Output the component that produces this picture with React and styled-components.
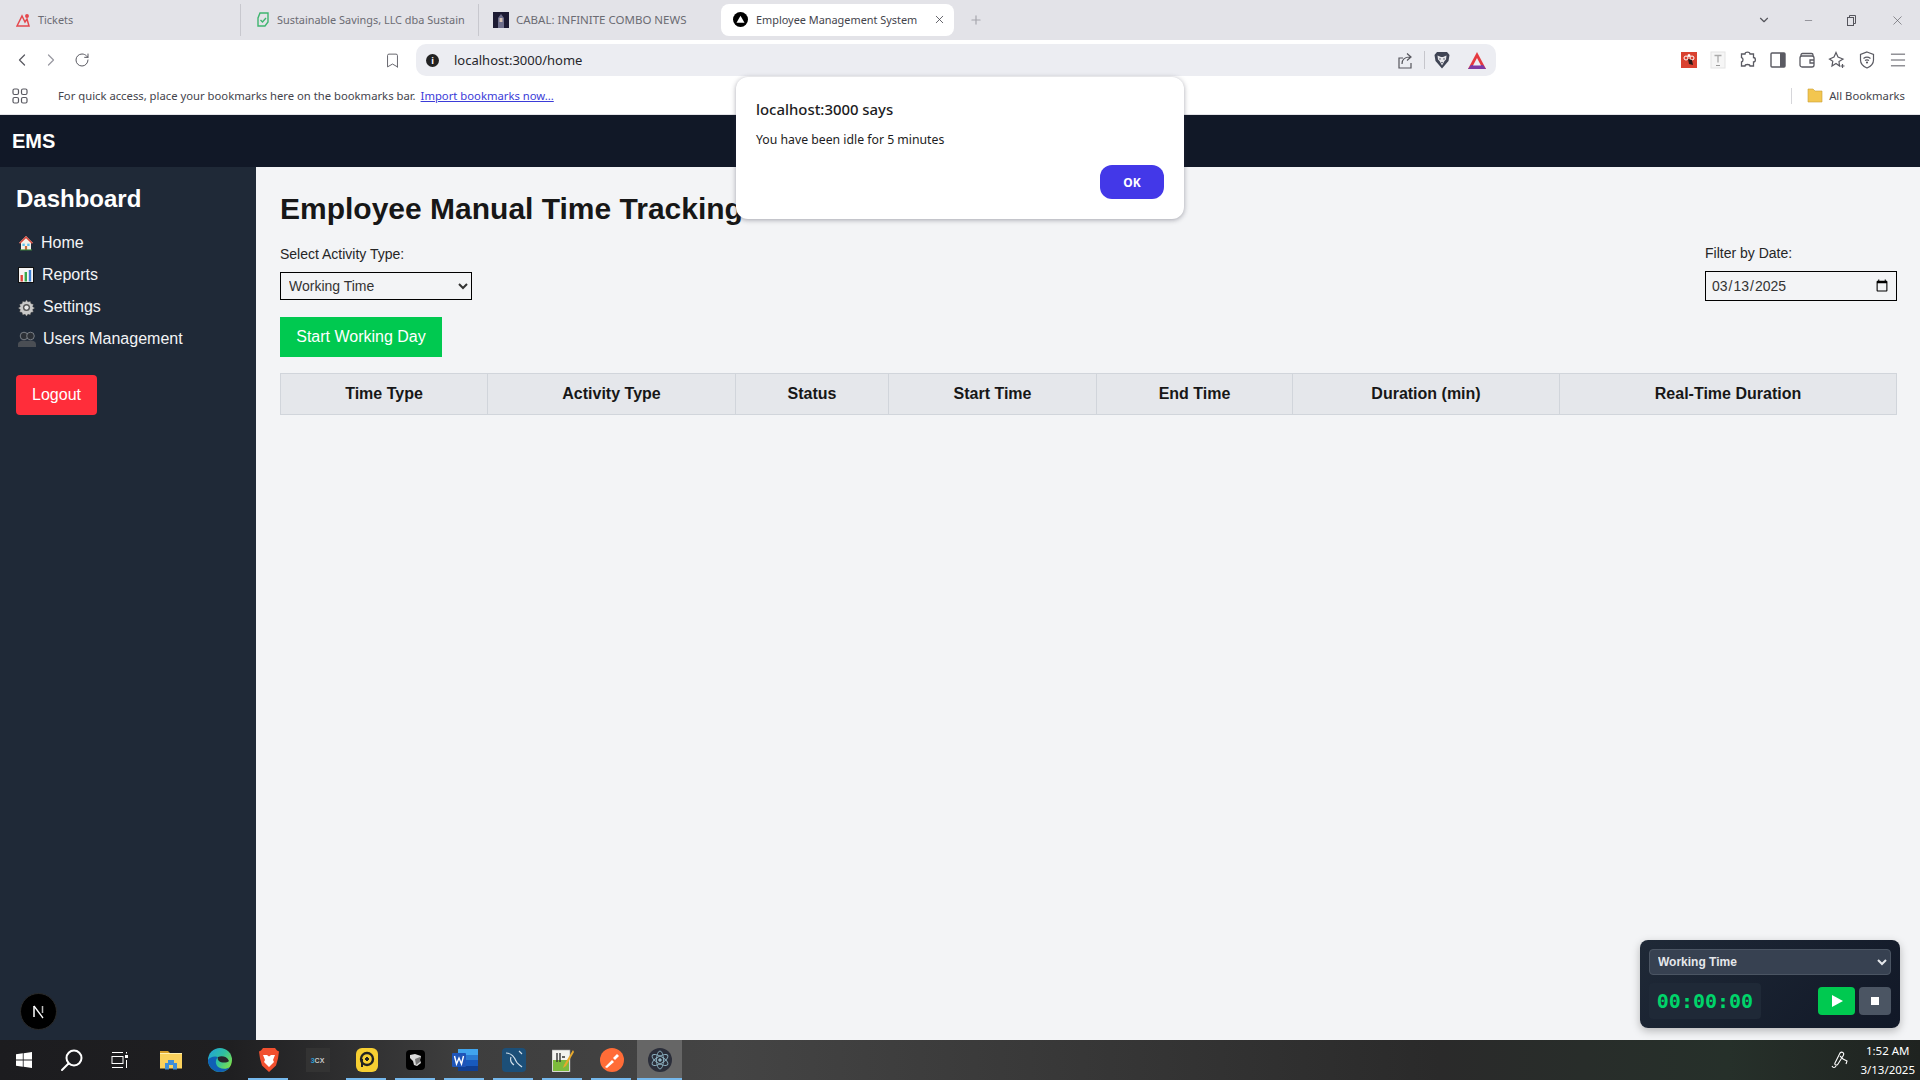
import React from "react";
import styled, { createGlobalStyle } from "styled-components";
import {
  ChevronLeft,
  ChevronRight,
  RotateCw,
  Bookmark,
  X,
  Plus,
  ChevronDown,
  Minus,
  Menu,
} from "lucide-react";

const GlobalStyle = createGlobalStyle`
  html, body {
    margin: 0;
    padding: 0;
    height: 100%;
    overflow: hidden;
  }
  body {
    font-family: "Liberation Sans", Arial, sans-serif;
    background: #f3f4f6;
  }
  * {
    box-sizing: border-box;
  }
`;

const chromeFont = `"Noto Sans", "Open Sans", sans-serif`;

const Page = styled.div`
  position: relative;
  display: flex;
  flex-direction: column;
  width: 1920px;
  height: 1080px;
  overflow: hidden;
`;

/* browser chrome */
const TabStrip = styled.div`
  display: flex;
  align-items: center;
  height: 40px;
  flex: none;
  background: #e3e3e8;
  font-family: ${chromeFont};
  font-size: 10.9px;
  color: #6b6b73;
`;

const Tab = styled.div`
  display: flex;
  align-items: center;
  gap: ${(props) => props.$gap || 7}px;
  width: ${(props) => props.$width}px;
  height: 32px;
  padding-left: ${(props) => props.$pad}px;
  padding-bottom: 1px;
  border-right: ${(props) => (props.$divider ? "1px solid #c8c8ce" : "none")};
  font-size: ${(props) => props.$size || 10.9}px;
  overflow: hidden;
  white-space: nowrap;
`;

const TabLabel = styled.span`
  display: block;
  max-width: 188px;
  overflow: hidden;
`;

const ActiveTab = styled.div`
  display: flex;
  align-items: center;
  gap: 8px;
  width: 233px;
  height: 32px;
  margin-left: 1px;
  padding: 0 8px 1px 12px;
  background: #fff;
  border-radius: 8px;
  color: #44444c;
  white-space: nowrap;
`;

const TabTitle = styled.span`
  flex: 1;
`;

const NewTab = styled.div`
  display: flex;
  margin-left: 15px;
  color: #a5a5ac;
`;

const WindowControls = styled.div`
  display: flex;
  align-items: center;
  gap: 32px;
  margin-left: auto;
  padding-right: 15px;
  color: #55555c;
`;

const Toolbar = styled.div`
  display: flex;
  align-items: center;
  height: 40px;
  flex: none;
  padding: 0 12px;
  background: #fff;
  color: #5a5a62;
`;

const NavIcons = styled.div`
  display: flex;
  align-items: center;
  gap: 9px;
  width: 372px;
`;

const ForwardIcon = styled.span`
  display: flex;
  margin-right: 4px;
  color: #9a9aa2;
`;

const BookmarkSlot = styled.div`
  display: flex;
  width: 32px;
`;

const AddressBar = styled.div`
  display: flex;
  align-items: center;
  width: 1080px;
  height: 32px;
  padding: 0 10px;
  background: #ecedf2;
  border-radius: 10px;
  font-family: ${chromeFont};
  font-size: 13px;
  color: #26262c;
`;

const InfoDot = styled.span`
  display: flex;
  align-items: center;
  justify-content: center;
  width: 13px;
  height: 13px;
  margin-right: 15px;
  border-radius: 50%;
  background: #222;
  color: #fff;
  font-size: 9px;
  font-weight: 700;
`;

const AddressEnd = styled.div`
  display: flex;
  align-items: center;
  gap: 9px;
  margin-left: auto;
`;

const ThinRule = styled.span`
  width: 1px;
  height: 18px;
  background: #c6c6cc;
`;

const Extensions = styled.div`
  display: flex;
  align-items: center;
  gap: 13px;
  margin-left: auto;
`;

const BookmarksBar = styled.div`
  display: flex;
  align-items: center;
  height: 35px;
  flex: none;
  padding: 0 15px 3px 12px;
  background: #fff;
  border-bottom: 1px solid #e4e4e8;
  font-family: ${chromeFont};
  font-size: 11.27px;
  color: #44444c;
`;

const BookmarkHint = styled.span`
  margin-left: 30px;
  padding-bottom: 1px;
`;

const ImportLink = styled.a`
  margin-left: 5px;
  padding-bottom: 1px;
  color: #3b3bd8;
  text-decoration: underline;
`;

const AllBookmarks = styled.div`
  display: flex;
  align-items: center;
  gap: 6px;
  margin-left: auto;
  padding-left: 15px;
  border-left: 1px solid #d6d6da;
  height: 16px;
`;

/* app */
const TopBar = styled.header`
  display: flex;
  align-items: center;
  flex: none;
  height: 52px;
  padding-left: 12px;
  background: #111827;
  color: #fff;
  font-size: 20px;
  font-weight: 700;
`;

const Body = styled.div`
  display: flex;
  flex: 1;
  min-height: 0;
`;

const Sidebar = styled.aside`
  display: flex;
  flex-direction: column;
  flex: none;
  width: 256px;
  padding: 17px 16px 16px;
  background: #1f2937;
  color: #fff;
`;

const SidebarTitle = styled.h2`
  margin: 0 0 17px;
  font-size: 24px;
  line-height: 30px;
  font-weight: 700;
`;

const NavList = styled.ul`
  display: flex;
  flex-direction: column;
  gap: 8px;
  margin: 0 0 24px;
  padding: 0;
  list-style: none;
`;

const NavItem = styled.li`
  display: flex;
  align-items: center;
  gap: ${(props) => props.$gap}px;
  height: 24px;
  padding-left: 2px;
  font-size: 16px;
  color: #f3f4f6;
`;

const LogoutButton = styled.button`
  width: 81px;
  height: 40px;
  border: none;
  border-radius: 4px;
  background: #ff2d3a;
  color: #fff;
  font-family: inherit;
  font-size: 16px;
`;

const Main = styled.main`
  flex: 1;
  padding: 24px;
  background: #f3f4f6;
  color: #171717;
`;

const Heading = styled.h1`
  margin: 0 0 16px;
  font-size: 30px;
  line-height: 36px;
  font-weight: 700;
`;

const FilterRow = styled.div`
  display: flex;
  justify-content: space-between;
  margin-bottom: 16px;
`;

const Field = styled.div`
  display: flex;
  flex-direction: column;
`;

const FieldLabel = styled.label`
  margin-bottom: 8px;
  padding-top: ${(props) => props.$top}px;
  font-size: 14px;
  line-height: 20px;
  color: #262626;
`;

const ActivitySelect = styled.select`
  width: 192px;
  height: 28px;
  padding: 0 4px;
  border: 1px solid #000;
  background: #f3f4f6;
  color: #333;
  font-family: inherit;
  font-size: 14px;
  border-radius: 0;
`;

const DateInput = styled.input`
  width: 192px;
  height: 30px;
  padding: 0 5px;
  border: 1px solid #000;
  background: #f3f4f6;
  color: #333;
  font-family: inherit;
  font-size: 14px;
`;

const StartButton = styled.button`
  display: block;
  width: 162px;
  height: 40px;
  margin-bottom: 16px;
  border: none;
  background: #00c950;
  color: #fff;
  font-family: inherit;
  font-size: 16px;
`;

const Table = styled.table`
  width: 100%;
  border-collapse: collapse;
  table-layout: fixed;
`;

const Column = styled.col`
  width: ${(props) => props.$width}px;
`;

const HeaderCell = styled.th`
  height: 41px;
  padding: 0;
  border: 1px solid #d1d5db;
  background: #e5e7eb;
  font-size: 16px;
  font-weight: 700;
  text-align: center;
  color: #171717;
`;

/* floating bits */
const AlertBox = styled.div`
  position: absolute;
  top: 77px;
  left: 736px;
  display: flex;
  flex-direction: column;
  width: 448px;
  height: 142px;
  padding: 21px 20px 20px;
  border-radius: 12px;
  background: #fff;
  box-shadow: 0 1px 5px rgba(40, 40, 60, 0.4);
  font-family: ${chromeFont};
  color: #1c1c22;
`;

const AlertTitle = styled.div`
  font-size: 14.9px;
  line-height: 22px;
  font-weight: 500;
`;

const AlertText = styled.div`
  margin-top: 11px;
  font-size: 12.25px;
  line-height: 18px;
`;

const AlertOk = styled.button`
  align-self: flex-end;
  width: 64px;
  height: 34px;
  margin-top: auto;
  border: none;
  border-radius: 12px;
  background: #4338e8;
  color: #fff;
  font-family: inherit;
  font-size: 12px;
  font-weight: 700;
`;

const DevBadge = styled.div`
  position: absolute;
  left: 20px;
  top: 993px;
  display: flex;
  align-items: center;
  justify-content: center;
  width: 37px;
  height: 37px;
  border-radius: 50%;
  background: #000;
  border: 1px solid #2a2a2a;
`;

const TimerPanel = styled.div`
  position: absolute;
  left: 1640px;
  top: 940px;
  display: flex;
  flex-direction: column;
  gap: 8px;
  width: 260px;
  height: 88px;
  padding: 9px;
  border-radius: 8px;
  background: linear-gradient(135deg, #1f2937, #111827);
  box-shadow: 0 3px 8px rgba(0, 0, 0, 0.25);
`;

const TimerSelect = styled.select`
  width: 100%;
  height: 26px;
  padding: 0 4px;
  border: 1px solid #4b5563;
  border-radius: 4px;
  background: #374151;
  color: #e5e7eb;
  font-family: inherit;
  font-size: 12px;
  font-weight: 700;
`;

const TimerRow = styled.div`
  display: flex;
  align-items: center;
  gap: 4px;
`;

const Clock = styled.div`
  width: 112px;
  height: 36px;
  margin-right: auto;
  border-radius: 4px;
  background: #1f2937;
  color: #00d46a;
  font-family: "DejaVu Sans Mono", "Liberation Mono", monospace;
  font-size: 20px;
  font-weight: 700;
  line-height: 36px;
  text-align: center;
`;

const TimerButton = styled.button`
  display: flex;
  align-items: center;
  justify-content: center;
  width: ${(props) => props.$width}px;
  height: 28px;
  padding: 0;
  border: none;
  border-radius: 4px;
  background: ${(props) => props.$bg};
`;

/* taskbar */
const Taskbar = styled.footer`
  display: flex;
  align-items: center;
  flex: none;
  height: 40px;
  background: linear-gradient(
    90deg,
    #1c1c1f 0,
    #1f1f21 12%,
    #3e3e3e 24%,
    #444 38%,
    #383838 55%,
    #2a2a2a 75%,
    #26302a 90%,
    #1f2320 100%
  );
  color: #fff;
`;

const SystemSlots = styled.div`
  display: flex;
  width: 146px;
`;

const SystemSlot = styled.div`
  display: flex;
  align-items: center;
  justify-content: center;
  width: 48px;
  height: 40px;
`;

const TaskSlot = styled.div`
  position: relative;
  display: flex;
  align-items: center;
  justify-content: center;
  width: ${(props) => (props.$active ? 45 : 49)}px;
  height: 40px;
  margin-left: ${(props) => (props.$active ? 1 : 0)}px;
  background: ${(props) => (props.$active ? "#666" : "transparent")};
  &::after {
    content: "";
    display: ${(props) => (props.$open ? "block" : "none")};
    position: absolute;
    left: ${(props) => (props.$active ? 0 : 4)}px;
    right: ${(props) => (props.$active ? 0 : 5)}px;
    bottom: 0;
    height: 2px;
    background: #76b9ed;
  }
`;

const ThreeCx = styled.span`
  display: flex;
  align-items: center;
  justify-content: center;
  width: 24px;
  height: 24px;
  background: #333;
  color: #c8c8c8;
  font-size: 7px;
  font-weight: 700;
`;

const ThreeMark = styled.span`
  color: #2b9bd3;
`;

const Tray = styled.div`
  display: flex;
  align-items: center;
  gap: 11px;
  margin-left: auto;
  padding-right: 5px;
`;

const TrayClock = styled.div`
  font-family: ${chromeFont};
  font-size: 11.5px;
  line-height: 19px;
  text-align: center;
`;

const NAV_COLUMNS = [
  ["Time Type", 207],
  ["Activity Type", 248],
  ["Status", 153],
  ["Start Time", 208],
  ["End Time", 196],
  ["Duration (min)", 267],
  ["Real-Time Duration", 337],
];

const HomeIcon = () => (
  <svg width="16" height="16" viewBox="0 0 16 16">
    <path d="M8 1 1 8h2v7h10V8h2z" fill="#f5f0e6" />
    <path d="M8 1 1 8l1.2.8L8 3.2l5.8 5.6L15 8z" fill="#d8473b" />
    <rect x="4.4" y="8.6" width="2.4" height="2.4" fill="#5cc3ee" />
    <rect x="9.2" y="8.6" width="2.4" height="2.4" fill="#5cc3ee" />
    <rect x="6.9" y="11" width="2.2" height="4" fill="#c56b3a" />
    <rect x="2" y="14.4" width="12" height="1" fill="#3f8f3a" />
  </svg>
);

const ChartIcon = () => (
  <svg width="16" height="16" viewBox="0 0 16 16">
    <rect x="0.5" y="0.5" width="15" height="15" fill="#f4f4f4" stroke="#111" />
    <rect x="2.5" y="8" width="2.4" height="6.5" fill="#e0443a" />
    <rect x="6.6" y="5" width="2.4" height="9.5" fill="#39a84a" />
    <rect x="10.8" y="3" width="2.4" height="11.5" fill="#3a7fd5" />
  </svg>
);

const GearIcon = () => (
  <svg width="17" height="17" viewBox="0 0 24 24">
    <path
      d="M12 1l2 3 3.500-1 .8 3.500 3.500.8-1 3.500 3 2-3 2 1 3.500-3.500.8-.8 3.500-3.500-1-2 3-2-3-3.500 1-.8-3.500-3.500-.8 1-3.500-3-2 3-2-1-3.500 3.500-.8.8-3.500 3.500 1z"
      fill="#c9c9c9"
      stroke="#333"
      strokeWidth="0.6"
    />
    <circle cx="12" cy="12" r="5" fill="#555" />
    <circle cx="12" cy="12" r="3" fill="#e8e8e8" />
  </svg>
);

const BustsIcon = () => (
  <svg width="18" height="16" viewBox="0 0 18 16">
    <circle cx="6" cy="5" r="3.800" fill="#2c3036" stroke="#9a9ea3" strokeWidth="0.7" />
    <circle cx="12.500" cy="5" r="3.800" fill="#2c3036" stroke="#9a9ea3" strokeWidth="0.7" />
    <path d="M0 16v-2.500C0 10.500 3 9.500 6 9.500c1.500 0 2.500.3 3 .5.500-.2 2-.5 3.500-.5 3 0 5.500 1 5.500 4V16z" fill="#4a4e54" />
  </svg>
);

const TicketsFavicon = () => (
  <svg width="14" height="14" viewBox="0 0 14 14" fill="none" stroke="#e5484d" strokeWidth="1.500">
    <path d="M1 13 6 3l3 6 2-3 2 7z" />
    <circle cx="11" cy="3" r="1.200" fill="#e5484d" />
  </svg>
);

const SavingsFavicon = () => (
  <svg width="14" height="16" viewBox="0 0 14 16" fill="none" stroke="#3fb56f" strokeWidth="1.400">
    <path d="M4 1h8v9l-3 4H2V6z" />
    <path d="M4.500 8l2 2 3.500-4" />
  </svg>
);

const CabalFavicon = () => (
  <svg width="16" height="16" viewBox="0 0 16 16">
    <rect width="16" height="16" fill="#1d1b33" />
    <path d="M5 16V6l3-4 3 4v10z" fill="#6f6f8c" />
    <path d="M6.500 6h3v4h-3z" fill="#d7c3b5" />
  </svg>
);

const VercelFavicon = () => (
  <svg width="15" height="15" viewBox="0 0 15 15">
    <circle cx="7.500" cy="7.500" r="7.500" fill="#000" />
    <path d="M7.500 3.800 11.500 10.800h-8z" fill="#fff" />
  </svg>
);

const RestoreIcon = () => (
  <svg width="12" height="12" viewBox="0 0 12 12" fill="none" stroke="currentColor">
    <rect x="1.500" y="3.500" width="6" height="8" />
    <path d="M3.500 3.500v-2h6v8h-2" />
  </svg>
);

const ShareIcon = () => (
  <svg width="18" height="18" viewBox="0 0 18 18" fill="none" stroke="#55555c" strokeWidth="1.200">
    <path d="M6 7H2v10h12v-5" />
    <path d="M5 13c0-5 3-7 8-7M10 2.500 14 6l-4 3.500" />
  </svg>
);

const LionIcon = () => (
  <svg width="16" height="18" viewBox="0 0 16 18">
    <path d="M3 1h10l2.500 3-1 6-6.500 7.500L1.500 10l-1-6z" fill="#3f4454" />
    <path d="M3.500 4.500 7 6h2l3.500-1.500-.5 4-1.500 1.500L8 14.500 5.500 10 4 8.500z" fill="#e6e6ea" />
    <path d="M5 7.500h2L6 9zM9 7.500h2L10 9zM7 11h2l-1 1.500z" fill="#3f4454" />
  </svg>
);

const BatIcon = () => (
  <svg width="18" height="17" viewBox="0 0 18 17">
    <path d="M9 0 18 17H0z" fill="#e5393f" />
    <path d="M0 17l3-4h12l3 4z" fill="#7d3aa3" />
    <path d="M9 6 13 13.500H5z" fill="#ecedf2" />
  </svg>
);

const ExtPixel = () => (
  <svg width="16" height="16" viewBox="0 0 16 16">
    <rect width="16" height="16" fill="#d9412f" />
    <circle cx="5" cy="6" r="2" fill="none" stroke="#fff" />
    <circle cx="11" cy="6" r="2" fill="none" stroke="#fff" />
    <circle cx="8" cy="3.500" r="1.500" fill="#fff" />
    <path d="M7 7l4 1 1 5-4-1z" fill="#2b1a18" />
  </svg>
);

const ExtT = () => (
  <svg width="16" height="18" viewBox="0 0 16 18">
    <rect x="1" y="1" width="14" height="16" fill="#f6f6f6" stroke="#e4e4e4" />
    <path d="M4.500 4.500h7M8 4.500v7" stroke="#aaa" strokeWidth="1.300" fill="none" />
    <path d="M6 14.500h4" stroke="#999" />
  </svg>
);

const ExtPuzzle = () => (
  <svg width="18" height="18" viewBox="0 0 18 18" fill="none" stroke="#5a5a62" strokeWidth="1.300">
    <path d="M6 3c0-2.500 5-2.500 5 0h3.500v3.500c2.500 0 2.500 4.500 0 4.500V15H11c0-2-5-2-5 0H2.500v-4c2-.5 2-4 0-4.500V3z" />
  </svg>
);

const ExtPanel = () => (
  <svg width="16" height="16" viewBox="0 0 16 16">
    <rect x="1" y="1" width="14" height="14" rx="1" fill="#fff" stroke="#5a5a62" strokeWidth="1.400" />
    <rect x="10" y="1" width="5" height="14" fill="#5a5a62" />
  </svg>
);

const ExtWallet = () => (
  <svg width="16" height="16" viewBox="0 0 16 16" fill="none" stroke="#5a5a62" strokeWidth="1.300">
    <path d="M2 4V3q0-1.500 1.500-1.500h9Q14 1.500 14 3v1" />
    <rect x="1" y="4" width="14" height="11" rx="2" />
    <path d="M15 8h-4v3h4" />
  </svg>
);

const ExtStar = () => (
  <svg width="18" height="18" viewBox="0 0 18 18" fill="none" stroke="#5a5a62" strokeWidth="1.200">
    <path d="M8 1.500 10 6l5 2-4 2.500.500 4.500-3.500-2.500L4 15l.8-4.800L1.500 8l4.500-2z" />
    <path d="M14.500 13v4M12.500 15h4" />
  </svg>
);

const ExtShield = () => (
  <svg width="16" height="18" viewBox="0 0 16 18" fill="none" stroke="#5a5a62" strokeWidth="1.200">
    <path d="M8 1l6.500 2.500V9c0 4-3 6.500-6.500 8-3.500-1.500-6.500-4-6.500-8V3.500z" />
    <path d="M4.500 7.500c2-1.500 5-1.500 7 0M6 9.500c1.300-.8 2.700-.8 4 0" />
    <circle cx="8" cy="11.500" r=".5" />
  </svg>
);

const AppsIcon = () => (
  <svg width="16" height="16" viewBox="0 0 16 16" fill="none" stroke="#5a5a62" strokeWidth="1.200">
    <rect x="1" y="1" width="5.500" height="5.500" rx="1.500" />
    <rect x="9.500" y="1" width="5.500" height="5.500" rx="1.500" />
    <rect x="1" y="9.500" width="5.500" height="5.500" rx="1.500" />
    <rect x="9.500" y="9.500" width="5.500" height="5.500" rx="1.500" />
  </svg>
);

const FolderIcon = () => (
  <svg width="16" height="15" viewBox="0 0 16 15">
    <path d="M1 1h5l2 2h7v11H1z" fill="#f3c64f" stroke="#c9a035" strokeWidth="0.6" />
  </svg>
);

const NextMark = () => (
  <svg width="17" height="17" viewBox="0 0 17 17" fill="none" stroke="#fff" strokeWidth="1.500">
    <path d="M4 14V3" />
    <path d="M4 3l9 12" strokeWidth="1.300" />
    <path d="M12.500 3v7" stroke="#bbb" />
  </svg>
);

const WinIcon = () => (
  <svg width="16" height="16" viewBox="0 0 16 16" fill="#fff">
    <path d="M0 2.300 6.800 1.300V7.600H0zM7.600 1.200 16 0V7.600H7.600zM0 8.400H6.800V14.700L0 13.700zM7.600 8.400H16V16L7.600 14.800z" />
  </svg>
);

const SearchIcon = () => (
  <svg width="24" height="24" viewBox="0 0 24 24" fill="none" stroke="#fff" strokeWidth="2">
    <circle cx="14" cy="10" r="7.500" />
    <path d="M8.500 15.500 2 22" strokeLinecap="round" />
  </svg>
);

const TaskViewIcon = () => (
  <svg width="18" height="16" viewBox="0 0 18 16" fill="#fff">
    <rect x="1" y="4.500" width="11" height="7" fill="none" stroke="#fff" />
    <rect x="1" y="0" width="11" height="1" />
    <rect x="1" y="15" width="11" height="1" />
    <rect x="14" y="3" width="3" height="3" />
    <rect x="15" y="0" width="1" height="1.500" />
    <rect x="15" y="8" width="1" height="8" />
  </svg>
);

const ExplorerIcon = () => (
  <svg width="22" height="20" viewBox="0 0 22 20">
    <path d="M0 1h8l2 2H0z" fill="#d9a12b" />
    <rect y="3" width="22" height="15.500" fill="#fbd25d" />
    <path d="M5 19.500V13h3v-3h6v3h3v6.500h-4V15H9v4.500z" fill="#3f8fd8" />
    <rect x="0" y="3" width="22" height="1" fill="#fff0b0" />
  </svg>
);

const EdgeIcon = () => (
  <svg width="24" height="24" viewBox="0 0 24 24">
    <defs>
      <linearGradient id="edgeTop" x1="0" y1="0" x2="1" y2="0.700">
        <stop offset="0" stopColor="#1f9fe0" />
        <stop offset="0.55" stopColor="#2fc0a0" />
        <stop offset="1" stopColor="#7fe04a" />
      </linearGradient>
    </defs>
    <circle cx="12" cy="12" r="12" fill="url(#edgeTop)" />
    <path d="M12 24C5 24 0 18 0 12c1.500-3 7-4.500 10-3-3 3-3 8 1 10.500 4 2 8 1.500 11-.5-2 3-6 5-10 5z" fill="#0f5fb5" />
    <path d="M10 9c4-1.500 9-.5 11 4-2 2-8 2-10 0-1.500-1.500-1.500-3-1-4z" fill="#26262a" />
  </svg>
);

const BraveIcon = () => (
  <svg width="20" height="24" viewBox="0 0 20 24">
    <path d="M4 0h12l2 2.500 2 1-1 7-2 7-7 6.500-7-6.500-2-7-1-7 2-1z" fill="#f1502f" />
    <path d="M4 7h4l2 1.500L12 7h4l-2 5 1 2-5 5-5-5 1-2z" fill="#fff" />
  </svg>
);

const LdIcon = () => (
  <svg width="22" height="24" viewBox="0 0 22 24">
    <rect width="22" height="24" rx="6" fill="#f7cf32" />
    <circle cx="11" cy="11" r="6" fill="none" stroke="#222" strokeWidth="2.400" />
    <path d="M6 19V11M9 11h4M11 9v4" stroke="#222" strokeWidth="2" />
  </svg>
);

const CubeIcon = () => (
  <svg width="19" height="20" viewBox="0 0 19 20">
    <rect width="19" height="20" rx="4" fill="#000" />
    <path d="M4 5l5-1 6 2-1 4 1 3-4 3-3-1-1-4-3-3z" fill="#d8d8d8" />
    <path d="M9 9l5-2v5l-4 3z" fill="#777" />
  </svg>
);

const WordIcon = () => (
  <svg width="26" height="24" viewBox="0 0 26 24">
    <rect x="6" y="1" width="20" height="22" rx="1" fill="#2b7cd3" />
    <rect x="6" y="1" width="20" height="6" fill="#41a5ee" />
    <rect x="6" y="12" width="20" height="6" fill="#185abd" />
    <rect x="6" y="18" width="20" height="5" fill="#103f91" />
    <rect x="0" y="5" width="14" height="14" rx="1" fill="#1f55b8" />
    <path d="M2.500 8l2 8 2.500-6 2.500 6 2-8" fill="none" stroke="#fff" strokeWidth="1.400" />
  </svg>
);

const MysqlIcon = () => (
  <svg width="24" height="24" viewBox="0 0 24 24">
    <rect width="24" height="24" rx="4" fill="#1c4f78" />
    <path d="M4 5c5 0 8 3 10 8 1 3 4 4 6 6M9 9c-1 3 0 6 3 8M17 3l3 3" fill="none" stroke="#d5e2ec" strokeWidth="1.100" />
  </svg>
);

const NotepadIcon = () => (
  <svg width="22" height="24" viewBox="0 0 22 24">
    <rect x="0" y="2" width="18" height="22" fill="#f3f3ee" stroke="#999" strokeWidth="0.6" />
    <rect x="1" y="12" width="16" height="11" fill="#7dbb3c" />
    <path d="M5 5v9M8 5v9M10 9h3" stroke="#333" strokeWidth="1.400" />
    <path d="M21 2 12 17l-1 3 3-2L22 4z" fill="#e8a92c" />
  </svg>
);

const PostmanIcon = () => (
  <svg width="24" height="24" viewBox="0 0 24 24">
    <circle cx="12" cy="12" r="12" fill="#ff6c37" />
    <path d="M5 19l7-7 2 2-7 6zM13 10l4-4 2 2-4 4z" fill="#fff" />
  </svg>
);

const ElectronIcon = () => (
  <svg width="24" height="24" viewBox="0 0 24 24" fill="none" stroke="#8fb4c4" strokeWidth="0.9">
    <circle cx="12" cy="12" r="12" fill="#2b2e3a" stroke="none" />
    <ellipse cx="12" cy="12" rx="9" ry="3.500" transform="rotate(30 12 12)" />
    <ellipse cx="12" cy="12" rx="9" ry="3.500" transform="rotate(-30 12 12)" />
    <ellipse cx="12" cy="12" rx="9" ry="3.500" transform="rotate(90 12 12)" />
    <circle cx="12" cy="12" r="1.300" fill="#8fb4c4" />
  </svg>
);

const PenIcon = () => (
  <svg width="18" height="18" viewBox="0 0 18 18" fill="none" stroke="#fff" strokeWidth="1.100">
    <path d="M9 2c2-2 5 0 3 3L7 13c-1 2-4 1-3-1zM9 5l3 3M1 15c1 2 3 2 4 0" />
    <path d="M12 8l4 2-1 3" />
  </svg>
);

const SYSTEM_ITEMS = [
  { key: "win", icon: <WinIcon /> },
  { key: "search", icon: <SearchIcon /> },
  { key: "tasks", icon: <TaskViewIcon /> },
];

const TASK_ITEMS = [
  { key: "files", icon: <ExplorerIcon /> },
  { key: "edge", icon: <EdgeIcon /> },
  { key: "brave", icon: <BraveIcon />, open: true },
  {
    key: "3cx",
    icon: (
      <ThreeCx>
        <ThreeMark>3</ThreeMark>CX
      </ThreeCx>
    ),
  },
  { key: "ld", icon: <LdIcon />, open: true },
  { key: "cube", icon: <CubeIcon />, open: true },
  { key: "word", icon: <WordIcon />, open: true },
  { key: "mysql", icon: <MysqlIcon />, open: true },
  { key: "notepad", icon: <NotepadIcon />, open: true },
  { key: "postman", icon: <PostmanIcon />, open: true },
  { key: "electron", icon: <ElectronIcon />, open: true, active: true },
];

const App = () => {
  return (
    <Page>
      <GlobalStyle />

      <TabStrip>
        <Tab $width={241} $pad={16} $gap={8} $divider>
          <TicketsFavicon />
          Tickets
        </Tab>
        <Tab $width={238} $pad={15} $divider>
          <SavingsFavicon />
          <TabLabel>Sustainable Savings, LLC dba Sustain</TabLabel>
        </Tab>
        <Tab $width={241} $pad={14} $size={11.5}>
          <CabalFavicon />
          CABAL: INFINITE COMBO NEWS
        </Tab>
        <ActiveTab>
          <VercelFavicon />
          <TabTitle>Employee Management System</TabTitle>
          <X size={13} strokeWidth={1.5} />
        </ActiveTab>
        <NewTab>
          <Plus size={14} />
        </NewTab>
        <WindowControls>
          <ChevronDown size={14} />
          <Minus size={11} strokeWidth={1.2} />
          <RestoreIcon />
          <X size={15} strokeWidth={1} />
        </WindowControls>
      </TabStrip>

      <Toolbar>
        <NavIcons>
          <ChevronLeft size={20} strokeWidth={1.5} />
          <ForwardIcon>
            <ChevronRight size={20} strokeWidth={1.5} />
          </ForwardIcon>
          <RotateCw size={16} strokeWidth={1.5} />
        </NavIcons>
        <BookmarkSlot>
          <Bookmark size={17} strokeWidth={1.3} />
        </BookmarkSlot>
        <AddressBar>
          <InfoDot>i</InfoDot>
          localhost:3000/home
          <AddressEnd>
            <ShareIcon />
            <ThinRule />
            <LionIcon />
            <span />
            <BatIcon />
          </AddressEnd>
        </AddressBar>
        <Extensions>
          <ExtPixel />
          <ExtT />
          <ExtPuzzle />
          <ExtPanel />
          <ExtWallet />
          <ExtStar />
          <ExtShield />
          <Menu size={20} strokeWidth={1.2} />
        </Extensions>
      </Toolbar>

      <BookmarksBar>
        <AppsIcon />
        <BookmarkHint>For quick access, place your bookmarks here on the bookmarks bar.</BookmarkHint>
        <ImportLink>Import bookmarks now...</ImportLink>
        <AllBookmarks>
          <FolderIcon />
          All Bookmarks
        </AllBookmarks>
      </BookmarksBar>

      <TopBar>EMS</TopBar>

      <Body>
        <Sidebar>
          <SidebarTitle>Dashboard</SidebarTitle>
          <NavList>
            <NavItem $gap={7}>
              <HomeIcon />
              Home
            </NavItem>
            <NavItem $gap={8}>
              <ChartIcon />
              Reports
            </NavItem>
            <NavItem $gap={8}>
              <GearIcon />
              Settings
            </NavItem>
            <NavItem $gap={7}>
              <BustsIcon />
              Users Management
            </NavItem>
          </NavList>
          <LogoutButton>Logout</LogoutButton>
        </Sidebar>

        <Main>
          <Heading>Employee Manual Time Tracking</Heading>
          <FilterRow>
            <Field>
              <FieldLabel $top={1}>Select Activity Type:</FieldLabel>
              <ActivitySelect defaultValue="working">
                <option value="working">Working Time</option>
                <option value="break">Break Time</option>
              </ActivitySelect>
            </Field>
            <Field>
              <FieldLabel $top={0}>Filter by Date:</FieldLabel>
              <DateInput type="date" defaultValue="2025-03-13" />
            </Field>
          </FilterRow>
          <StartButton>Start Working Day</StartButton>
          <Table>
            <colgroup>
              {NAV_COLUMNS.map(([name, width]) => (
                <Column key={name} $width={width} />
              ))}
            </colgroup>
            <thead>
              <tr>
                {NAV_COLUMNS.map(([name]) => (
                  <HeaderCell key={name}>{name}</HeaderCell>
                ))}
              </tr>
            </thead>
          </Table>
        </Main>
      </Body>

      <Taskbar>
        <SystemSlots>
          {SYSTEM_ITEMS.map((item) => (
            <SystemSlot key={item.key}>{item.icon}</SystemSlot>
          ))}
        </SystemSlots>
        {TASK_ITEMS.map((item) => (
          <TaskSlot key={item.key} $open={item.open} $active={item.active}>
            {item.icon}
          </TaskSlot>
        ))}
        <Tray>
          <PenIcon />
          <TrayClock>
            1:52 AM
            <br />
            3/13/2025
          </TrayClock>
        </Tray>
      </Taskbar>

      <AlertBox>
        <AlertTitle>localhost:3000 says</AlertTitle>
        <AlertText>You have been idle for 5 minutes</AlertText>
        <AlertOk>OK</AlertOk>
      </AlertBox>

      <DevBadge>
        <NextMark />
      </DevBadge>

      <TimerPanel>
        <TimerSelect defaultValue="working">
          <option value="working">Working Time</option>
          <option value="break">Break Time</option>
        </TimerSelect>
        <TimerRow>
          <Clock>00:00:00</Clock>
          <TimerButton $width={37} $bg="#00c950">
            <svg width="12" height="12" viewBox="0 0 12 12">
              <path d="M1 0 12 6 1 12z" fill="#fff" />
            </svg>
          </TimerButton>
          <TimerButton $width={32} $bg="#4b5563">
            <svg width="8" height="8" viewBox="0 0 8 8">
              <rect width="8" height="8" fill="#fff" />
            </svg>
          </TimerButton>
        </TimerRow>
      </TimerPanel>
    </Page>
  );
};

export default App;
